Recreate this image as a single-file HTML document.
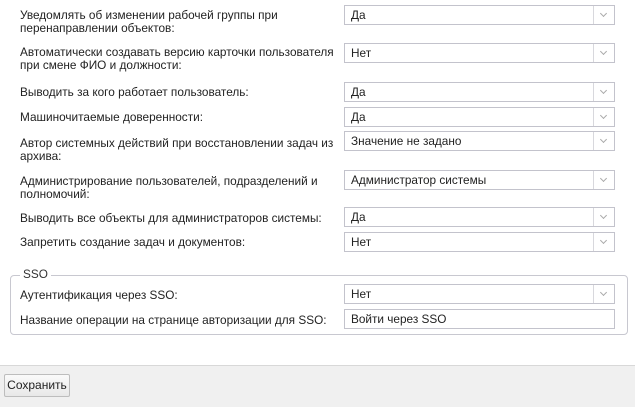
<!DOCTYPE html>
<html><head><meta charset="utf-8"><style>
body{margin:0;width:635px;height:406px;background:#fff;font-family:"Liberation Sans",sans-serif;font-size:11.8px;color:#222;position:relative;overflow:hidden}
.l{position:absolute;left:20px;width:320px;line-height:13px;white-space:nowrap}
.s{position:absolute;left:344px;width:269px;height:18px;border:1px solid #c3c3cc;background:#fff;line-height:18px;box-sizing:content-box}
.s span{position:absolute;left:6px;top:0}
.s i{position:absolute;right:0;top:0;width:20px;height:18px;border-left:1px solid #d8d8dd}
.s i:after{content:"";position:absolute;left:7px;top:5px;width:4px;height:4px;border-right:1px solid #aaa;border-bottom:1px solid #aaa;transform:rotate(45deg)}
.fs{position:absolute;left:10px;top:275px;width:618px;height:60px;border:1px solid #c8c8d0;border-radius:4px;box-sizing:border-box}
.lg{position:absolute;left:20px;top:268px;padding:0 3px;background:#fff;color:#333;line-height:13px}
.foot{position:absolute;left:0;top:365px;width:635px;height:41px;background:#f0f0f0;border-top:1px solid #d8d8d8}
.btn{position:absolute;left:4px;top:8px;width:64px;height:21px;border:1px solid #bdbdbd;border-radius:2px;background:linear-gradient(#fafafa,#e8e8e8);text-align:center;line-height:21px;font-size:12px}
</style></head><body>
<div class="l" style="top:9px">Уведомлять об изменении рабочей группы при<br>перенаправлении объектов:</div>
<div class="s" style="top:5px"><span>Да</span><i></i></div>
<div class="l" style="top:46px">Автоматически создавать версию карточки пользователя<br>при смене ФИО и должности:</div>
<div class="s" style="top:43px"><span>Нет</span><i></i></div>
<div class="l" style="top:86px">Выводить за кого работает пользователь:</div>
<div class="s" style="top:82px"><span>Да</span><i></i></div>
<div class="l" style="top:111px">Машиночитаемые доверенности:</div>
<div class="s" style="top:107px"><span>Да</span><i></i></div>
<div class="l" style="top:137px">Автор системных действий при восстановлении задач из<br>архива:</div>
<div class="s" style="top:131px"><span>Значение не задано</span><i></i></div>
<div class="l" style="top:175px">Администрирование пользователей, подразделений и<br>полномочий:</div>
<div class="s" style="top:170px"><span>Администратор системы</span><i></i></div>
<div class="l" style="top:212px">Выводить все объекты для администраторов системы:</div>
<div class="s" style="top:207px"><span>Да</span><i></i></div>
<div class="l" style="top:236px">Запретить создание задач и документов:</div>
<div class="s" style="top:232px"><span>Нет</span><i></i></div>
<div class="fs"></div>
<div class="lg">SSO</div>
<div class="l" style="top:289px">Аутентификация через SSO:</div>
<div class="s" style="top:284px"><span>Нет</span><i></i></div>
<div class="l" style="top:314px">Название операции на странице авторизации для SSO:</div>
<div class="s" style="top:309px"><span>Войти через SSO</span></div>
<div class="foot"><div class="btn">Сохранить</div></div>
</body></html>
